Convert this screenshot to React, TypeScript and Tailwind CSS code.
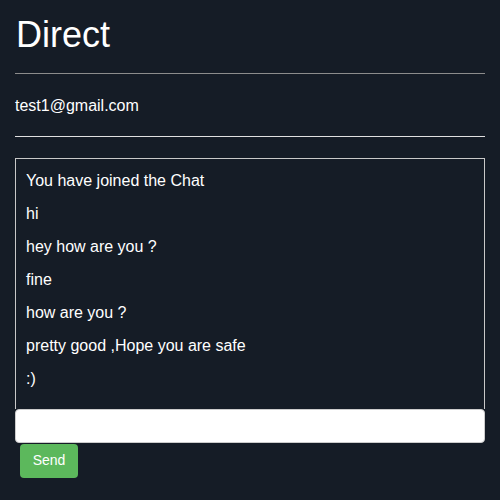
import React from "react";

const messages = [
  "You have joined the Chat",
  "hi",
  "hey how are you ?",
  "fine",
  "how are you ?",
  "pretty good ,Hope you are safe",
  ":)",
];

export default function App() {
  return (
    <div className="w-[500px] h-[500px] bg-[#151c26] text-white px-[15px] font-['Liberation_Sans',Arial,sans-serif] overflow-hidden">
      <h1 className="text-[36px] leading-[41px] pt-[14px] pl-px">Direct</h1>
      <hr className="mt-[18px] border-0 border-t border-[#8c8c8c]" />
      <div className="h-[62px] flex items-center text-[16px] pt-px">test1@gmail.com</div>
      <hr className="border-0 border-t border-[#e0e0e0]" />
      <div className="mt-[21px] border border-b-0 border-[#c8c8c8] h-[251px] pt-[5px] px-[10px]">
        {messages.map((m, i) => (
          <div key={i} className="h-[33px] flex items-center text-[16px]">
            {m}
          </div>
        ))}
      </div>
      <input
        type="text"
        className="block w-full h-[34px] bg-white rounded-[4px] border border-[#cccccc] outline-none text-black px-3"
      />
      <button className="ml-[5px] mt-px w-[58px] h-[34px] pb-px bg-[#5cb85c] rounded-[4px] text-white text-[14px]">
        Send
      </button>
    </div>
  );
}
